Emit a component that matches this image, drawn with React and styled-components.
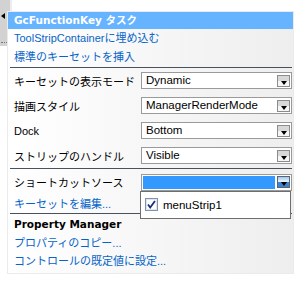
import React from 'react';
import styled, { createGlobalStyle } from 'styled-components';

const GlobalStyle = createGlobalStyle`
  html, body {
    margin: 0;
    padding: 0;
    background: #ffffff;
  }
  body {
    font-family: 'Liberation Sans', 'Noto Sans CJK JP', sans-serif;
    font-size: 11px;
  }
`;

const Stage = styled.div`
  position: relative;
  width: 308px;
  height: 283px;
  overflow: hidden;
  padding: 11px 0 0 7px;
  box-sizing: border-box;
`;

// gray designer tray peeking out behind the panel
const Tray = styled.div`
  position: absolute;
  left: 0;
  top: 0;
  width: 10px;
  height: 46px;
  background: #d2d2d2;
  border-right: 2px solid #ededed;
`;

const TrayArrow = styled.div`
  position: absolute;
  left: 1px;
  top: 13px;
  width: 0;
  height: 0;
  border-top: 3px solid transparent;
  border-bottom: 3px solid transparent;
  border-right: 4px solid #000;
`;

const TrayDots = styled.div`
  position: absolute;
  left: 1px;
  top: 42px;
  width: 6px;
  border-top: 1px dotted #777;
`;

const Panel = styled.div`
  position: relative;
  width: 287px;
  height: 263px;
  box-sizing: border-box;
  border: 1px solid #ebebeb;
  background: linear-gradient(to right, #ffffff, #eeeeee);
  display: flex;
  flex-direction: column;
`;

const TitleBar = styled.div`
  height: 17px;
  background: #66b3ff;
  color: #ffffff;
  font-family: 'DejaVu Sans', 'Noto Sans CJK JP', sans-serif;
  font-weight: bold;
  font-size: 10.5px;
  line-height: 17px;
  padding-left: 6px;
`;

const Body = styled.div`
  padding: 0 1px 0 2px;
  display: flex;
  flex-direction: column;
`;

const Link = styled.a`
  display: block;
  height: ${(p) => p.h || 19}px;
  line-height: ${(p) => p.h || 19}px;
  padding-left: 4px;
  color: #0664c8;
  text-decoration: none;
  white-space: nowrap;
`;

const Separator = styled.div`
  height: 1px;
  background: #47525c;
`;

const Row = styled.div`
  display: grid;
  grid-template-columns: 131px 151px;
  align-items: center;
  height: ${(p) => p.h || 25}px;
`;

const Label = styled.span`
  padding-left: 4px;
  color: #000;
  white-space: nowrap;
`;

const Combo = styled.div`
  position: relative;
  height: 17px;
  box-sizing: border-box;
  border: 1px solid #9a9a9a;
  background: #fff;
  display: flex;
  align-items: center;
  padding: 0 1px 0 1px;
  gap: 2px;
`;

const ComboText = styled.div`
  flex: 1;
  height: 13px;
  line-height: 13px;
  padding-left: 3px;
  color: #000;
  font-size: 11.5px;
  background: ${(p) => (p.selected ? '#3399ff' : 'transparent')};
`;

const ComboButton = styled.div`
  width: 13px;
  height: 12px;
  box-sizing: border-box;
  border: 1px solid ${(p) => (p.active ? '#5a6470' : '#8c8c8c')};
  background: ${(p) =>
    p.active
      ? 'linear-gradient(to bottom, #9cc8f0 0, #e8f2fc 45%, #3d84d0 46%, #3d84d0 100%)'
      : 'linear-gradient(to bottom, #d8d8d8 0, #d8d8d8 45%, #f6f6f6 46%, #f6f6f6 100%)'};
  display: flex;
  align-items: flex-end;
  justify-content: center;
  padding-bottom: 1px;

  &::after {
    content: '';
    width: 0;
    height: 0;
    border-left: 3.5px solid transparent;
    border-right: 3.5px solid transparent;
    border-top: 4px solid #000;
  }
`;

const Popup = styled.div`
  position: absolute;
  left: -2px;
  top: 16px;
  width: 151px;
  height: 28px;
  box-sizing: border-box;
  border: 1px solid #6e6e6e;
  background: #fff;
  display: flex;
  align-items: center;
  padding-left: 4px;
  gap: 5px;
  z-index: 2;
`;

const PopupText = styled.span`
  color: #000;
  font-size: 11.5px;
`;

const Header = styled.div`
  height: 20px;
  line-height: 20px;
  padding-left: 4px;
  color: #000;
  font-family: 'DejaVu Sans', sans-serif;
  font-weight: bold;
  font-size: 10.5px;
`;

const CheckBox = () => (
  <svg width="13" height="13" viewBox="0 0 13 13">
    <rect x="0.5" y="0.5" width="12" height="12" fill="#fff" stroke="#7f93ad" />
    <rect x="1.5" y="1.5" width="10" height="10" fill="none" stroke="#dfe6ef" />
    <path d="M3 6.5 L5.2 9.5 L10 3" fill="none" stroke="#1a2e7a" strokeWidth="1.8" />
  </svg>
);

const PropRow = ({ label, value }) => (
  <Row>
    <Label>{label}</Label>
    <Combo>
      <ComboText>{value}</ComboText>
      <ComboButton />
    </Combo>
  </Row>
);

export default function App() {
  return (
    <>
      <GlobalStyle />
      <Stage>
        <Tray>
          <TrayArrow />
          <TrayDots />
        </Tray>
        <Panel>
          <TitleBar>GcFunctionKey タスク</TitleBar>
          <Body>
            <Link>ToolStripContainerに埋め込む</Link>
            <Link>標準のキーセットを挿入</Link>
            <Separator />
            <PropRow label="キーセットの表示モード" value="Dynamic" />
            <PropRow label="描画スタイル" value="ManagerRenderMode" />
            <PropRow label="Dock" value="Bottom" />
            <PropRow label="ストリップのハンドル" value="Visible" />
            <Separator />
            <Row h={26}>
              <Label>ショートカットソース</Label>
              <Combo>
                <ComboText selected />
                <ComboButton active />
                <Popup>
                  <CheckBox />
                  <PopupText>menuStrip1</PopupText>
                </Popup>
              </Combo>
            </Row>
            <Link h={18}>キーセットを編集...</Link>
            <Separator />
            <Header>Property Manager</Header>
            <Link h={18}>プロパティのコピー...</Link>
            <Link h={18}>コントロールの既定値に設定...</Link>
          </Body>
        </Panel>
      </Stage>
    </>
  );
}
